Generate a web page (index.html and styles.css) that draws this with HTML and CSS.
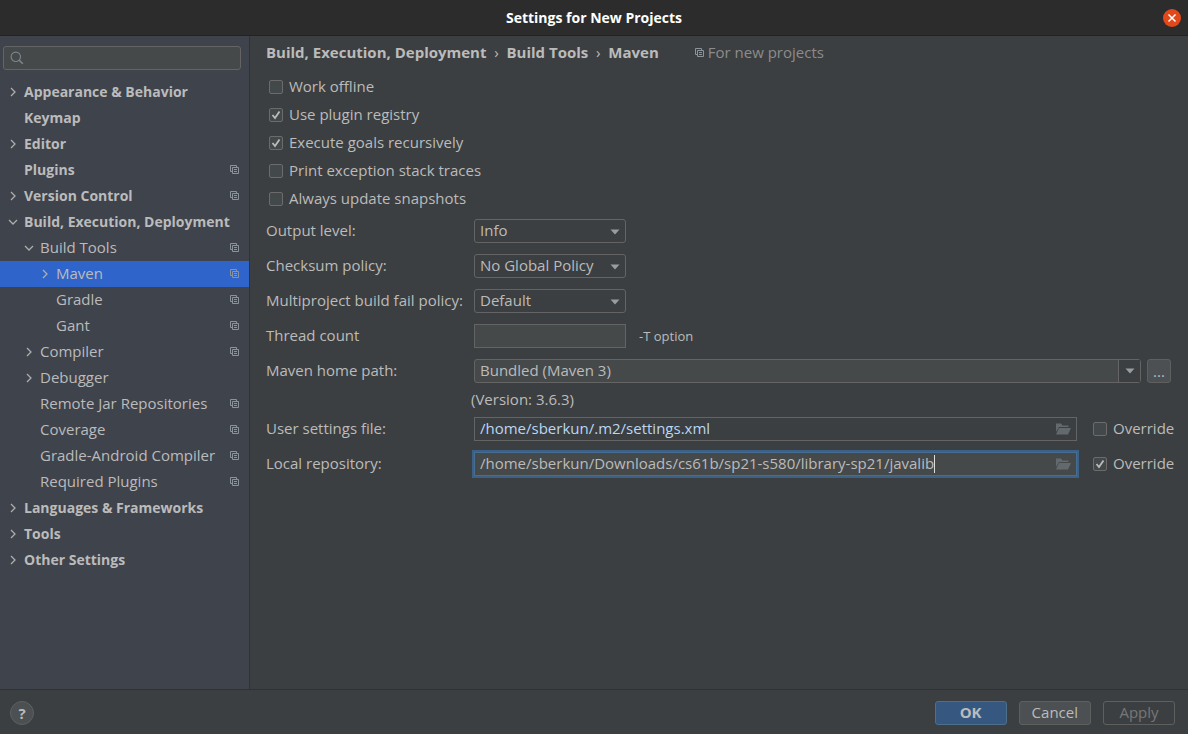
FILE: index.html
```
<!DOCTYPE html>
<html lang="en">
<head>
    <meta charset="UTF-8">
    <meta name="viewport" content="width=device-width, initial-scale=1.0">
    <title>Settings for New Projects</title>
    <link rel="stylesheet" href="styles.css">
</head>
<body>
    <!-- shared icons -->
    <svg class="sprite" aria-hidden="true">
        <symbol id="right" viewBox="0 0 10 10"><path d="M3 1l4 4-4 4" fill="none" stroke="#adadad" stroke-width="1.3"/></symbol>
        <symbol id="down" viewBox="0 0 10 10"><path d="M1 3l4 4 4-4" fill="none" stroke="#adadad" stroke-width="1.3"/></symbol>
        <symbol id="copy" viewBox="0 0 9 10"><path d="M2.500 6.500h-2v-6h6v2M2.500 2.500h6v6h-6zM4 4.500h3M4 6.500h3" fill="none" stroke="#8b949b"/></symbol>
        <symbol id="arrow" viewBox="0 0 10 6"><path d="M0.500 0.500h9L5 5.500z" fill="#9a9da0"/></symbol>
        <symbol id="folder" viewBox="0 0 16 12"><path d="M1 9V0.500h5l1.500 2h6V4H4z" fill="#626a6e"/><path d="M4 5h12l-3 6.500H1z" fill="#626a6e"/></symbol>
    </svg>

    <header class="titlebar">
        <h1>Settings for New Projects</h1>
        <button class="close" aria-label="Close">
            <svg width="18" height="18" viewBox="0 0 18 18"><circle cx="9" cy="9" r="9" fill="#e2491a"/><path d="M5.500 5.500l7 7M12.500 5.500l-7 7" stroke="#fff" stroke-width="1.5"/></svg>
        </button>
    </header>

    <div class="content">
        <nav class="sidebar">
            <div class="search">
                <svg width="14" height="14" viewBox="0 0 14 14"><circle cx="5.800" cy="5.800" r="4.700" fill="none" stroke="#7d868b" stroke-width="1.1"/><path d="M9.200 9.200l3.600 3.600" stroke="#7d868b" stroke-width="1.6"/></svg>
                <input type="text" aria-label="Search settings">
            </div>
            <ul class="tree">
                <li><a href="#" class="top"><svg class="chevron"><use href="#right"/></svg><span>Appearance &amp; Behavior</span></a></li>
                <li><a href="#" class="top"><i class="chevron"></i><span>Keymap</span></a></li>
                <li><a href="#" class="top"><svg class="chevron"><use href="#right"/></svg><span>Editor</span></a></li>
                <li><a href="#" class="top"><i class="chevron"></i><span>Plugins</span><svg class="copy"><use href="#copy"/></svg></a></li>
                <li><a href="#" class="top"><svg class="chevron"><use href="#right"/></svg><span>Version Control</span><svg class="copy"><use href="#copy"/></svg></a></li>
                <li><a href="#" class="top"><svg class="chevron"><use href="#down"/></svg><span>Build, Execution, Deployment</span></a>
                    <ul class="level2">
                        <li><a href="#"><svg class="chevron"><use href="#down"/></svg><span>Build Tools</span><svg class="copy"><use href="#copy"/></svg></a>
                            <ul class="level3">
                                <li><a href="#" class="selected"><svg class="chevron"><use href="#right"/></svg><span>Maven</span><svg class="copy"><use href="#copy"/></svg></a></li>
                                <li><a href="#"><i class="chevron"></i><span>Gradle</span><svg class="copy"><use href="#copy"/></svg></a></li>
                                <li><a href="#"><i class="chevron"></i><span>Gant</span><svg class="copy"><use href="#copy"/></svg></a></li>
                            </ul>
                        </li>
                        <li><a href="#"><svg class="chevron"><use href="#right"/></svg><span>Compiler</span><svg class="copy"><use href="#copy"/></svg></a></li>
                        <li><a href="#"><svg class="chevron"><use href="#right"/></svg><span>Debugger</span></a></li>
                        <li><a href="#"><i class="chevron"></i><span>Remote Jar Repositories</span><svg class="copy"><use href="#copy"/></svg></a></li>
                        <li><a href="#"><i class="chevron"></i><span>Coverage</span><svg class="copy"><use href="#copy"/></svg></a></li>
                        <li><a href="#"><i class="chevron"></i><span>Gradle-Android Compiler</span><svg class="copy"><use href="#copy"/></svg></a></li>
                        <li><a href="#"><i class="chevron"></i><span>Required Plugins</span><svg class="copy"><use href="#copy"/></svg></a></li>
                    </ul>
                </li>
                <li><a href="#" class="top"><svg class="chevron"><use href="#right"/></svg><span>Languages &amp; Frameworks</span></a></li>
                <li><a href="#" class="top"><svg class="chevron"><use href="#right"/></svg><span>Tools</span></a></li>
                <li><a href="#" class="top"><svg class="chevron"><use href="#right"/></svg><span>Other Settings</span></a></li>
            </ul>
        </nav>

        <main>
            <div class="breadcrumb">
                <a href="#">Build, Execution, Deployment</a>
                <span class="sep">›</span>
                <a href="#">Build Tools</a>
                <span class="sep">›</span>
                <a href="#">Maven</a>
                <span class="scope"><svg class="copy"><use href="#copy"/></svg>For new projects</span>
            </div>

            <div class="checks">
                <label class="check"><input type="checkbox">Work offline</label>
                <label class="check"><input type="checkbox" checked>Use plugin registry</label>
                <label class="check"><input type="checkbox" checked>Execute goals recursively</label>
                <label class="check"><input type="checkbox">Print exception stack traces</label>
                <label class="check"><input type="checkbox">Always update snapshots</label>
            </div>

            <div class="form">
                <div class="row">
                    <label class="name" for="output">Output level:</label>
                    <div class="dropdown short">
                        <select id="output"><option>Info</option></select>
                        <svg class="arrow"><use href="#arrow"/></svg>
                    </div>
                </div>
                <div class="row">
                    <label class="name" for="checksum">Checksum policy:</label>
                    <div class="dropdown short">
                        <select id="checksum"><option>No Global Policy</option></select>
                        <svg class="arrow"><use href="#arrow"/></svg>
                    </div>
                </div>
                <div class="row">
                    <label class="name" for="fail">Multiproject build fail policy:</label>
                    <div class="dropdown short">
                        <select id="fail"><option>Default</option></select>
                        <svg class="arrow"><use href="#arrow"/></svg>
                    </div>
                </div>
                <div class="row">
                    <label class="name" for="threads">Thread count</label>
                    <input type="text" id="threads" class="field short">
                    <span class="hint">-T option</span>
                </div>
                <div class="row">
                    <label class="name" for="home">Maven home path:</label>
                    <div class="dropdown combo">
                        <select id="home"><option>Bundled (Maven 3)</option></select>
                        <span class="opener"><svg class="arrow"><use href="#arrow"/></svg></span>
                    </div>
                    <button class="browse" aria-label="Browse">...</button>
                </div>
                <div class="version">(Version: 3.6.3)</div>
                <div class="row">
                    <label class="name" for="settings">User settings file:</label>
                    <div class="path readonly">
                        <input type="text" id="settings" value="/home/sberkun/.m2/settings.xml" readonly>
                        <svg class="folder"><use href="#folder"/></svg>
                    </div>
                    <label class="check override"><input type="checkbox">Override</label>
                </div>
                <div class="row">
                    <label class="name" for="repo">Local repository:</label>
                    <div class="path active">
                        <input type="text" id="repo" value="/home/sberkun/Downloads/cs61b/sp21-s580/library-sp21/javalib">
                        <span class="caret"></span>
                        <svg class="folder"><use href="#folder"/></svg>
                    </div>
                    <label class="check override"><input type="checkbox" checked>Override</label>
                </div>
            </div>
        </main>
    </div>

    <footer>
        <button class="help" aria-label="Help">?</button>
        <div class="actions">
            <button class="primary">OK</button>
            <button>Cancel</button>
            <button disabled>Apply</button>
        </div>
    </footer>
</body>
</html>
```
FILE: styles.css
```
* {
    box-sizing: border-box;
}
body {
    margin: 0;
    min-height: 100vh;
    display: flex;
    flex-direction: column;
    background: #3c3f41;
    color: #bbbbbb;
    font-family: "Open Sans", "Noto Sans", sans-serif;
    font-size: 15px;
    line-height: 20px;
}
a {
    color: inherit;
    text-decoration: none;
}
ul {
    list-style: none;
    margin: 0;
    padding: 0;
}
input, select, button {
    font: inherit;
    color: inherit;
    margin: 0;
    outline: none;
}
.sprite {
    display: none;
}

/* title bar */
.titlebar {
    display: grid;
    grid-template-columns: 1fr auto 1fr;
    align-items: center;
    height: 36px;
    padding: 0 7px;
    background: #2c2c2c;
    border-bottom: 1px solid #222222;
}
.titlebar h1 {
    grid-column: 2;
    margin: 0;
    font-size: 14px;
    color: #ffffff;
}
.close {
    justify-self: end;
    display: flex;
    padding: 0;
    border: none;
    background: none;
}

.content {
    flex: 1;
    display: flex;
}

/* settings tree */
.sidebar {
    width: 250px;
    flex-shrink: 0;
    padding-top: 10px;
    background: #3f434c;
    border-right: 1px solid #323232;
}
.search {
    display: flex;
    align-items: center;
    gap: 4px;
    height: 24px;
    margin: 0 8px 9px 3px;
    padding: 0 6px;
    background: #45494a;
    border: 1px solid #646464;
    border-radius: 3px;
}
.search input {
    flex: 1;
    min-width: 0;
    padding: 0;
    border: none;
    background: none;
}
.tree a {
    display: flex;
    align-items: center;
    height: 26px;
    padding: 0 10px 0 8px;
    white-space: nowrap;
}
.tree a span {
    flex: 1;
    padding-bottom: 2px;
}
.tree .top {
    font-size: 14px;
    font-weight: bold;
}
.tree .top span {
    padding-bottom: 0;
}
.tree .level2 a {
    padding-left: 24px;
}
.tree .level3 a {
    padding-left: 40px;
}
.tree .selected {
    background: #2f65ca;
}
.chevron {
    width: 10px;
    height: 10px;
    margin-right: 6px;
    flex-shrink: 0;
}
.copy {
    width: 9px;
    height: 10px;
    flex-shrink: 0;
}

/* right side */
main {
    flex: 1;
    min-width: 0;
    padding: 6px 14px 0 16px;
}
.breadcrumb {
    display: flex;
    align-items: center;
    font-weight: bold;
}
.sep {
    width: 20px;
    text-align: center;
    font-weight: normal;
}
.scope {
    display: flex;
    align-items: center;
    gap: 4px;
    margin-left: 36px;
    font-weight: normal;
    color: #8c8c8c;
}
.scope .copy {
    margin-top: 2px;
}
.checks {
    display: flex;
    flex-direction: column;
    align-items: flex-start;
    gap: 8px;
    padding: 14px 3px;
}
.check {
    display: flex;
    align-items: center;
    gap: 6px;
}
.check input {
    appearance: none;
    flex-shrink: 0;
    width: 14px;
    height: 14px;
    margin-top: 2px;
    background: #43494a;
    border: 1px solid #6b6b6b;
    border-radius: 2px;
}
.check input:checked {
    background: #43494a url("data:image/svg+xml,%3Csvg xmlns='http://www.w3.org/2000/svg' viewBox='0 0 12 12'%3E%3Cpath d='M2.500 6l2.500 3 4.500-6.500' fill='none' stroke='%23bbbbbb' stroke-width='1.8'/%3E%3C/svg%3E");
}
.form {
    display: flex;
    flex-direction: column;
    gap: 11px;
    margin-top: -3px;
}
.row {
    display: flex;
    align-items: center;
    height: 24px;
}
.name {
    width: 208px;
    flex-shrink: 0;
    padding-bottom: 2px;
}
.short {
    width: 152px;
}
.dropdown {
    position: relative;
    height: 24px;
}
.dropdown select {
    appearance: none;
    width: 100%;
    height: 24px;
    padding: 0 5px 2px;
    background: #3c3f41;
    border: 1px solid #646464;
    border-radius: 3px;
}
.arrow {
    width: 10px;
    height: 6px;
}
.dropdown > .arrow {
    position: absolute;
    right: 6px;
    top: 10px;
    pointer-events: none;
}
.combo {
    flex: 1;
}
.dropdown.combo select {
    background: #45494a;
}
.opener {
    position: absolute;
    top: 1px;
    right: 1px;
    bottom: 1px;
    width: 22px;
    display: flex;
    align-items: center;
    justify-content: center;
    background: #3c3f41;
    border-left: 1px solid #646464;
    pointer-events: none;
}
.field {
    height: 24px;
    padding: 0 5px;
    background: #45494a;
    border: 1px solid #646464;
}
.hint {
    margin-left: 13px;
    font-size: 13px;
}
button {
    background: #4c5052;
    border: 1px solid #5e6060;
    border-radius: 3px;
}
.browse {
    width: 24px;
    height: 24px;
    margin: 0 3px 0 6px;
    padding: 0;
}
.version {
    padding: 0 0 2px 205px;
    line-height: 10px;
}
.path {
    flex: 1;
    min-width: 0;
    display: flex;
    align-items: center;
    height: 24px;
    padding: 0 5px;
    background: #45494a;
    border: 1px solid #646464;
}
.path input {
    flex: 1;
    min-width: 0;
    padding: 0 0 2px;
    border: none;
    background: none;
}
.readonly {
    background: #3c3f41;
    color: #bbd6f2;
}
.active {
    border-color: #466d94;
    box-shadow: 0 0 0 2px #3d6185;
}
.active input {
    flex: 0 1 auto;
    field-sizing: content;
}
.caret {
    width: 1px;
    height: 18px;
    background: #dddddd;
}
.folder {
    width: 16px;
    height: 12px;
    margin-left: auto;
    flex-shrink: 0;
}
.override {
    width: 97px;
    padding: 0 0 2px 16px;
}

/* bottom buttons */
footer {
    display: flex;
    align-items: center;
    justify-content: space-between;
    height: 45px;
    padding: 2px 13px 0 10px;
    border-top: 1px solid #323232;
}
.help {
    width: 24px;
    height: 24px;
    padding: 0;
    border-radius: 50%;
    font-weight: bold;
}
.actions {
    display: flex;
    gap: 12px;
}
.actions button {
    min-width: 72px;
    height: 24px;
    padding: 0 12px 2px;
}
.actions .primary {
    background: #365880;
    border-color: #4c708c;
    font-weight: bold;
}
.actions button:disabled {
    background: none;
    color: #777777;
}
```
